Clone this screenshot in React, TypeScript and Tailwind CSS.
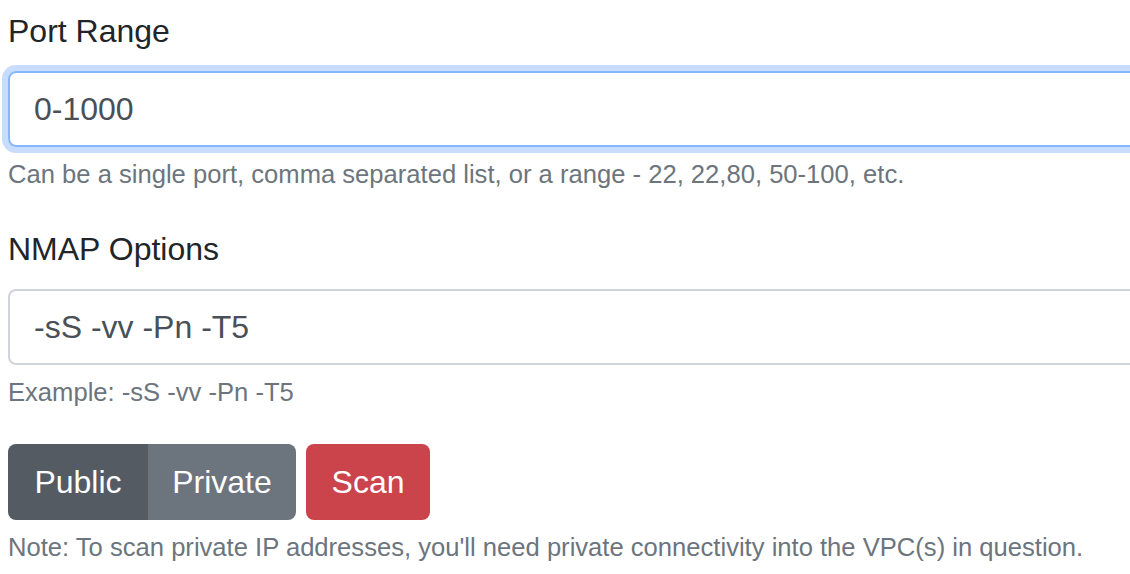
import React from "react";

export default function App() {
  return (
    <div
      className="w-[1130px] h-[574px] overflow-hidden bg-white text-[#212529]"
      style={{ fontFamily: '"Liberation Sans", Arial, Helvetica, sans-serif' }}
    >
      <div className="w-[1400px] px-[8px] pt-[7px]">
        <div className="mb-[32px]">
          <label className="block text-[32px] leading-[48px] mb-[16px]">Port Range</label>
          <div className="h-[76px] w-full rounded-[8px] border-2 border-[#86b7fe] shadow-[0_0_0_6px_#c8dcfd] px-[24px] flex items-center text-[32px] text-[#495057]">
            0-1000
          </div>
          <div className="mt-[8px] text-[25.6px] leading-[38.4px] text-[#6c757d]">
            Can be a single port, comma separated list, or a range - 22, 22,80, 50-100, etc.
          </div>
        </div>
        <div className="mb-[32px]">
          <label className="block text-[32px] leading-[48px] mb-[16px]">NMAP Options</label>
          <div className="h-[76px] w-full rounded-[8px] border-2 border-[#ced4da] px-[24px] flex items-center text-[32px] text-[#495057]">
            -sS -vv -Pn -T5
          </div>
          <div className="mt-[8px] text-[25.6px] leading-[38.4px] text-[#6c757d]">
            Example: -sS -vv -Pn -T5
          </div>
        </div>
        <div className="flex items-center">
          <div className="flex">
            <button className="h-[76px] w-[140px] rounded-l-[8px] bg-[#545b62] text-white text-[32px] leading-[48px]">
              Public
            </button>
            <button className="h-[76px] w-[148px] rounded-r-[8px] bg-[#6c757d] text-white text-[32px] leading-[48px]">
              Private
            </button>
          </div>
          <button className="ml-[10px] h-[76px] w-[124px] rounded-[8px] bg-[#cc444b] text-white text-[32px] leading-[48px]">
            Scan
          </button>
        </div>
        <div className="mt-[8px] text-[25.6px] leading-[38.4px] text-[#6c757d]">
          Note: To scan private IP addresses, you'll need private connectivity into the VPC(s) in question.
        </div>
      </div>
    </div>
  );
}
